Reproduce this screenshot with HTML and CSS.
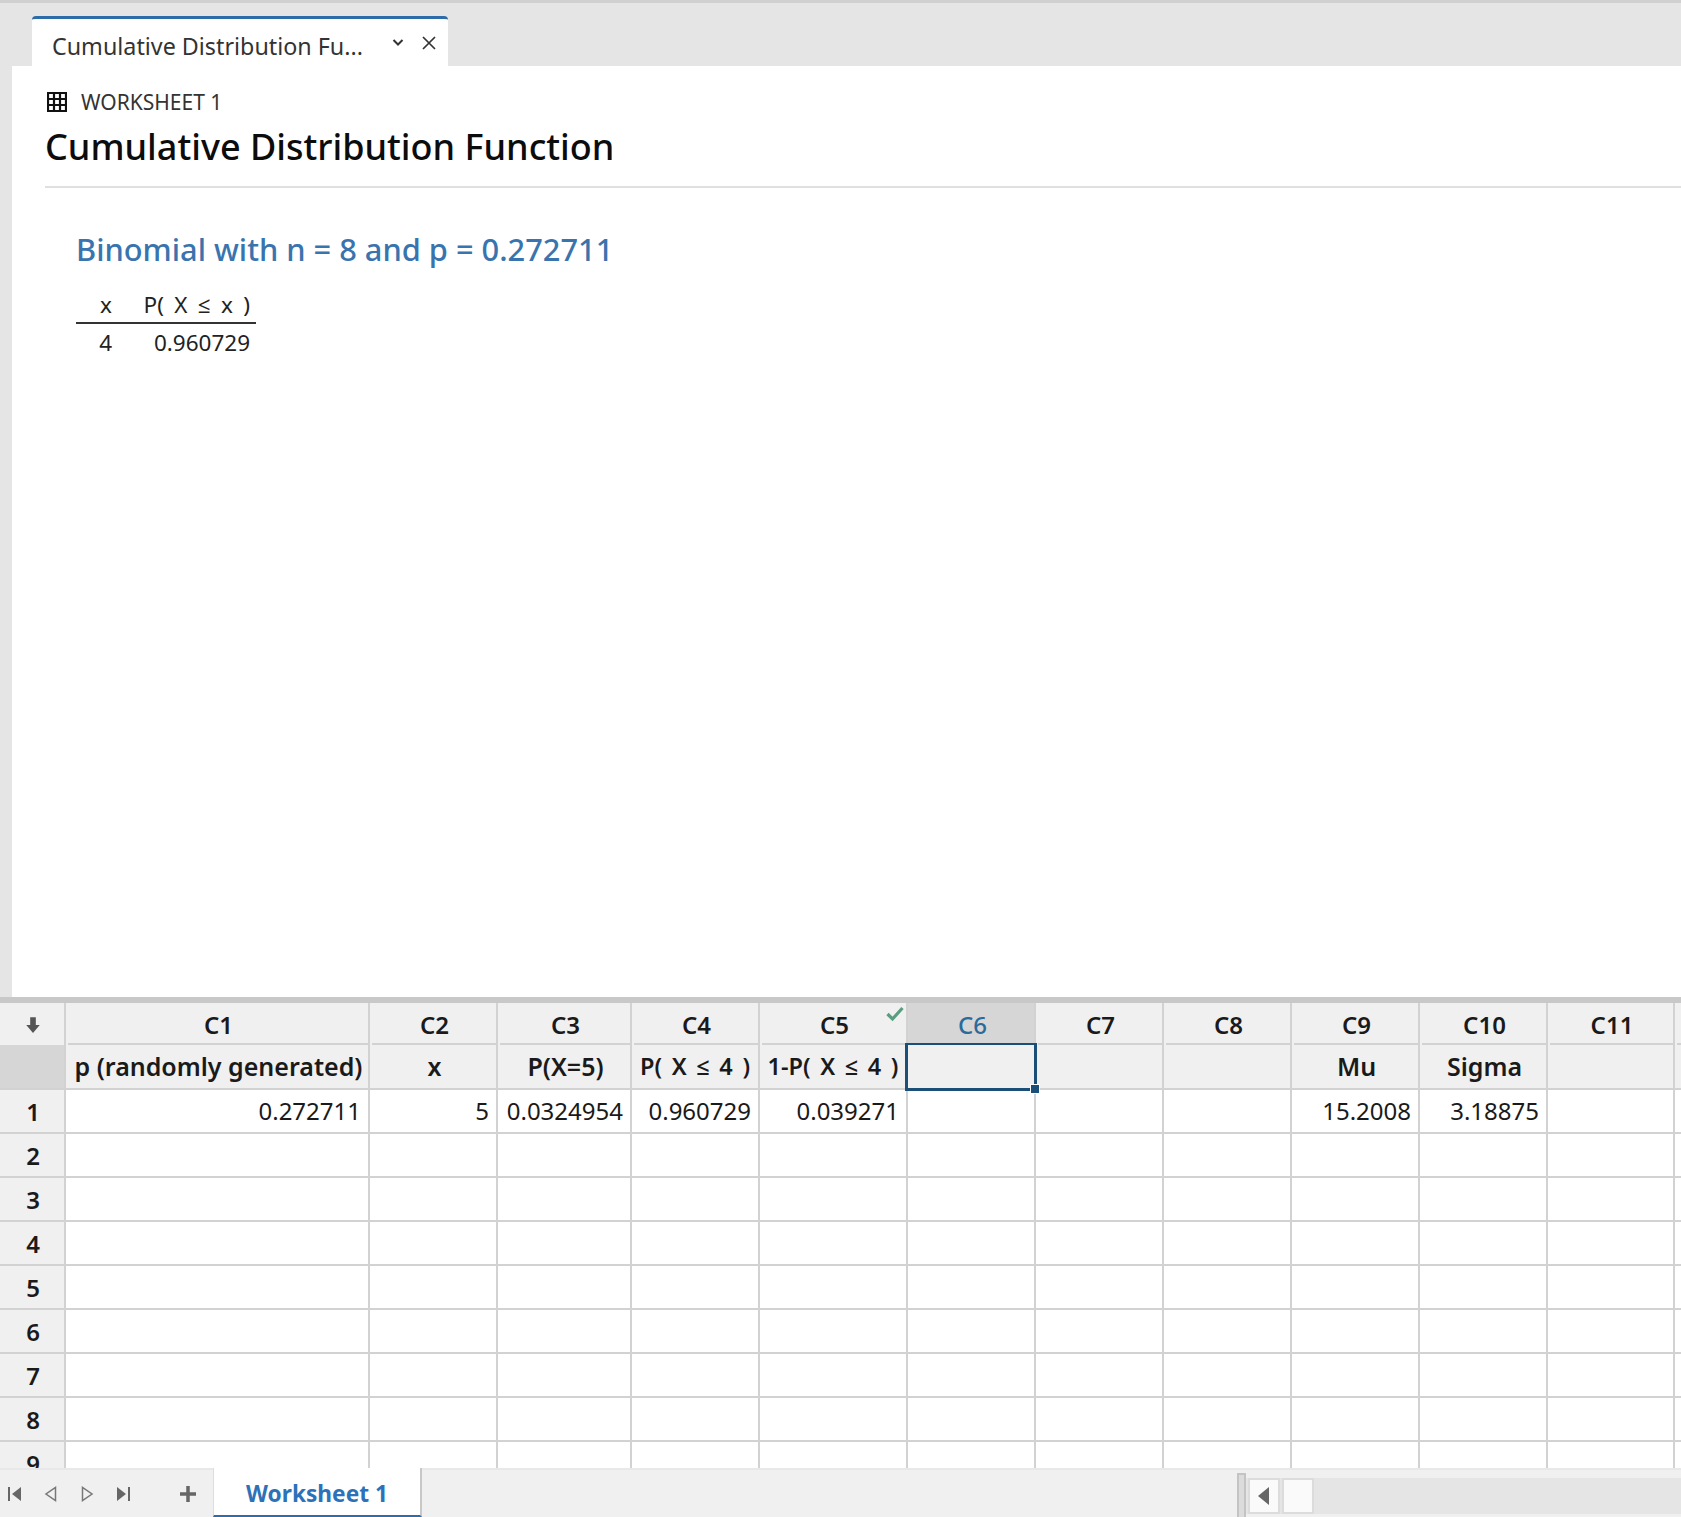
FILE: index.html
```html
<!DOCTYPE html>
<html lang="en">
<head>
  <meta charset="UTF-8">
  <title>Cumulative Distribution Function</title>
  <link rel="stylesheet" href="styles.css">
</head>
<body>
  <div class="app">
    <div class="tabstrip">
      <div class="tab">
        <span class="tab-title">Cumulative Distribution Fu...</span>
        <svg class="tab-icon" width="14" height="14" viewBox="0 0 14 14"><path d="M2.500 4 7 8.500 11.500 4" fill="none" stroke="#333" stroke-width="2"/></svg>
        <svg class="tab-icon" width="16" height="16" viewBox="0 0 16 16"><path d="M2 2l12 12M14 2 2 14" fill="none" stroke="#333" stroke-width="1.700"/></svg>
      </div>
    </div>

    <div class="pane">
      <div class="sheet-label">
        <svg width="20" height="20" viewBox="0 0 20 20"><path d="M1 1h18v18H1zM1 7h18M1 13h18M7 1v18M13 1v18" fill="none" stroke="#111" stroke-width="2.200"/></svg>
        <span>WORKSHEET 1</span>
      </div>
      <h1 class="title">Cumulative Distribution Function</h1>
      <div class="result">
        <h2 class="result-title">Binomial with n = 8 and p = 0.272711</h2>
        <table class="result-table">
          <tr><th class="c-x">x</th><th class="c-p">P( X ≤ x )</th></tr>
          <tr><td>4</td><td>0.960729</td></tr>
        </table>
      </div>
    </div>

    <div class="splitter"></div>

    <div class="grid-wrap">
      <table class="grid">
        <colgroup>
          <col class="w-gutter"><col class="w-c1"><col class="w-128"><col class="w-134"><col class="w-128"><col class="w-148">
          <col class="w-128"><col class="w-128"><col class="w-128"><col class="w-128"><col class="w-128"><col class="w-127"><col class="w-128">
        </colgroup>
        <tr class="ids">
          <th class="gutter">
            <svg width="18" height="18" viewBox="0 0 16 16"><path d="M5.500 1h5v7H14l-6 7-6-7h3.500z" fill="#555"/></svg>
          </th>
          <th>C1</th><th>C2</th><th>C3</th><th>C4</th>
          <th class="has-check">C5
            <svg class="check" width="18" height="16" viewBox="0 0 18 16"><path d="M1.500 8 6.500 13 16.500 2" fill="none" stroke="#5a9e80" stroke-width="3.200"/></svg>
          </th>
          <th class="current">C6</th><th>C7</th><th>C8</th><th>C9</th><th>C10</th><th>C11</th><th></th>
        </tr>
        <tr class="names">
          <th class="gutter blank"></th>
          <th>p (randomly generated)</th><th>x</th><th>P(X=5)</th><th class="spaced">P( X ≤ 4 )</th><th class="spaced">1-P( X ≤ 4 )</th>
          <th class="selected"><div class="sel-box"><div class="sel-handle"></div></div></th>
          <th></th><th></th><th>Mu</th><th>Sigma</th><th></th><th></th>
        </tr>
        <tr>
          <th class="gutter">1</th>
          <td>0.272711</td><td>5</td><td>0.0324954</td><td>0.960729</td><td>0.039271</td>
          <td></td><td></td><td></td><td>15.2008</td><td>3.18875</td><td></td><td></td>
        </tr>
        <tr><th class="gutter">2</th><td></td><td></td><td></td><td></td><td></td><td></td><td></td><td></td><td></td><td></td><td></td><td></td></tr>
        <tr><th class="gutter">3</th><td></td><td></td><td></td><td></td><td></td><td></td><td></td><td></td><td></td><td></td><td></td><td></td></tr>
        <tr><th class="gutter">4</th><td></td><td></td><td></td><td></td><td></td><td></td><td></td><td></td><td></td><td></td><td></td><td></td></tr>
        <tr><th class="gutter">5</th><td></td><td></td><td></td><td></td><td></td><td></td><td></td><td></td><td></td><td></td><td></td><td></td></tr>
        <tr><th class="gutter">6</th><td></td><td></td><td></td><td></td><td></td><td></td><td></td><td></td><td></td><td></td><td></td><td></td></tr>
        <tr><th class="gutter">7</th><td></td><td></td><td></td><td></td><td></td><td></td><td></td><td></td><td></td><td></td><td></td><td></td></tr>
        <tr><th class="gutter">8</th><td></td><td></td><td></td><td></td><td></td><td></td><td></td><td></td><td></td><td></td><td></td><td></td></tr>
        <tr><th class="gutter">9</th><td></td><td></td><td></td><td></td><td></td><td></td><td></td><td></td><td></td><td></td><td></td><td></td></tr>
      </table>
    </div>

    <div class="bottombar">
      <div class="nav">
        <svg width="16" height="18" viewBox="0 0 16 18"><path d="M2 2v14" stroke="#666" stroke-width="2"/><path d="M14 2v14L5 9z" fill="#666"/></svg>
        <svg width="16" height="18" viewBox="0 0 16 18"><path d="M12.500 2.500v13L3 9z" fill="none" stroke="#777" stroke-width="1.500"/></svg>
        <svg width="16" height="18" viewBox="0 0 16 18"><path d="M3.500 2.500v13L13 9z" fill="none" stroke="#777" stroke-width="1.500"/></svg>
        <svg width="16" height="18" viewBox="0 0 16 18"><path d="M14 2v14" stroke="#666" stroke-width="2"/><path d="M2 2v14L11 9z" fill="#666"/></svg>
      </div>
      <svg class="add" width="18" height="18" viewBox="0 0 18 18"><path d="M9 1v16M1 9h16" stroke="#666" stroke-width="3.500"/></svg>
      <div class="sheet-tab">Worksheet 1</div>
      <div class="scroll">
        <div class="scroll-grip"></div>
        <div class="scroll-track">
          <div class="scroll-btn"><svg width="12" height="18" viewBox="0 0 12 18"><path d="M11 0v18L0 9z" fill="#666"/></svg></div>
          <div class="scroll-btn"></div>
        </div>
      </div>
    </div>
  </div>
</body>
</html>
```

FILE: styles.css
```css
* {
  box-sizing: border-box;
}
body {
  margin: 0;
  font-family: "Noto Sans", "Open Sans", sans-serif;
  color: #111;
  background: #fff;
}
.app {
  display: flex;
  flex-direction: column;
  height: 1517px;
  overflow: hidden;
}

/* top tabs */
.tabstrip {
  height: 66px;
  padding-left: 32px;
  display: flex;
  align-items: flex-end;
  background: #e5e5e5;
  border-top: 3px solid #d0d0d0;
}
.tab {
  width: 416px;
  height: 50px;
  padding: 0 11px 0 20px;
  display: flex;
  align-items: center;
  background: #fff;
  border-top: 3px solid #2d6ca8;
  border-radius: 4px 4px 0 0;
}
.tab-title {
  flex: 1;
  padding-top: 6px;
  font-size: 23.300px;
  color: #333;
  white-space: nowrap;
}
.tab-icon {
  margin-left: 16px;
}

/* output pane */
.pane {
  flex: 1;
  padding: 24px 0 0 33px;
  background: #fff;
  border-left: 12px solid #e5e5e5;
}
.sheet-label {
  display: flex;
  align-items: center;
  gap: 14px;
  margin-left: 2px;
  font-size: 21px;
  line-height: 24px;
  color: #333;
}
.title {
  margin: 8px 0 0;
  padding-bottom: 14px;
  font-size: 36px;
  line-height: 50px;
  font-weight: 500;
  color: #0c0c0c;
  border-bottom: 2px solid #e0e0e0;
}
.result {
  padding: 40px 0 0 31px;
}
.result-title {
  margin: 0;
  font-size: 30.800px;
  line-height: 42px;
  font-weight: 500;
  color: #3a74ae;
}
.result-table {
  margin-top: 17px;
  border-collapse: collapse;
  font-size: 22.500px;
  color: #222;
}
.result-table th,
.result-table td {
  padding: 0 6px 0 0;
  height: 38px;
  text-align: right;
  font-weight: 400;
}
.result-table th {
  height: 36px;
  word-spacing: 4.500px;
  border-bottom: 2px solid #333;
}
.c-x {
  width: 42px;
}
.c-p {
  width: 138px;
}

.splitter {
  height: 6px;
  background: #c8c8c8;
}

/* worksheet grid */
.grid-wrap {
  height: 465px;
  overflow: hidden;
}
.grid {
  width: 1803px;
  table-layout: fixed;
  border-collapse: separate;
  border-spacing: 0;
  font-size: 24px;
  color: #1a1a1a;
}
.w-gutter { width: 66px; }
.w-c1 { width: 304px; }
.w-127 { width: 127px; }
.w-128 { width: 128px; }
.w-134 { width: 134px; }
.w-148 { width: 148px; }

.grid th,
.grid td {
  height: 44px;
  padding: 0;
  border-right: 2px solid #d2d2d2;
  border-bottom: 2px solid #d2d2d2;
  white-space: nowrap;
}
.grid th {
  padding-left: 3px;
  font-weight: 600;
  text-align: center;
  background: #f0f0f0;
}
.grid td {
  padding: 0 7px 2px 0;
  text-align: right;
  background: #fff;
}
.grid .ids th {
  height: 42px;
  position: relative;
  border-bottom: 0;
}
.grid .ids th::after {
  content: "";
  position: absolute;
  left: 2px;
  right: 0;
  bottom: 0;
  height: 2px;
  background: #d2d2d2;
}
.grid .names th {
  height: 45px;
  padding-bottom: 2px;
  font-size: 25px;
}
.grid .names .spaced {
  padding-left: 0;
  font-size: 23.500px;
  word-spacing: 3.500px;
}
.grid .ids .gutter::after {
  display: none;
}
.grid .gutter {
  padding-left: 2px;
}
.grid .gutter.blank {
  background: #d6d6d6;
}
.grid .current {
  background: #d6d6d6;
  color: #2c6a9a;
  font-weight: 500;
}
.grid .ids .current::after {
  display: none;
}
.check {
  position: absolute;
  top: 3px;
  right: 2px;
}
.grid .selected {
  position: relative;
}
.sel-box {
  position: absolute;
  left: -3px;
  right: -3px;
  top: -2px;
  bottom: -3px;
  border: 3px solid #1c4f78;
  border-top-width: 2px;
}
.sel-handle {
  position: absolute;
  right: -6px;
  bottom: -6px;
  width: 8px;
  height: 8px;
  background: #1c4f78;
  border: 1px solid #fff;
  box-sizing: content-box;
}

/* bottom bar */
.bottombar {
  height: 49px;
  display: flex;
  background: #f0f0f0;
  border-top: 2px solid #e8e8e8;
}
.nav {
  display: flex;
  align-items: center;
  gap: 20px;
  padding-left: 7px;
}
.add {
  align-self: center;
  margin: 0 16px 0 48px;
}
.sheet-tab {
  width: 209px;
  margin-top: -2px;
  padding: 2px 0 0;
  line-height: 47px;
  text-align: center;
  font-size: 22.700px;
  font-weight: 700;
  color: #2d72b8;
  background: #fff;
  border-left: 1px solid #ddd;
  border-right: 2px solid #c8c8c8;
  border-bottom: 2px solid #2d6ca8;
}
.scroll {
  margin-left: auto;
  width: 444px;
  display: flex;
  padding-top: 3px;
}
.scroll-grip {
  width: 9px;
  background: #dcdcdc;
  border: 2px solid #c4c4c4;
  border-bottom: 0;
}
.scroll-track {
  flex: 1;
  height: 36px;
  margin-top: 5px;
  display: flex;
  gap: 2px;
  padding-left: 2px;
  background: #e5e5e5;
}
.scroll-btn {
  width: 32px;
  display: flex;
  align-items: center;
  justify-content: center;
  background: #fafafa;
  border: 2px solid #dcdcdc;
}
```
